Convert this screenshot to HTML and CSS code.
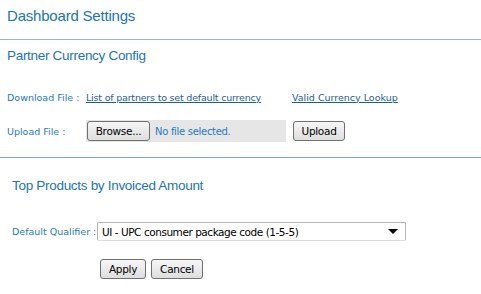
FILE: index.html
```html
<!DOCTYPE html>
<html lang="en">
<head>
    <meta charset="UTF-8">
    <meta name="viewport" content="width=device-width, initial-scale=1.0">
    <title>Dashboard Settings</title>
    <link rel="stylesheet" href="styles.css">
</head>
<body>

    <div class="page-title">Dashboard Settings</div>

    <div class="section currency">
        <h2>Partner Currency Config</h2>
        <div class="row download-row">
            <span class="label">Download File :</span>
            <a href="#" class="link partners-link">List of partners to set default currency</a>
            <a href="#" class="link">Valid Currency Lookup</a>
        </div>
        <div class="row upload-row">
            <span class="label">Upload File :</span>
            <div class="file-box">
                <button class="btn browse">Browse...</button>
                <span class="file-name">No file selected.</span>
            </div>
            <button class="btn upload">Upload</button>
        </div>
    </div>

    <div class="section products">
        <h2>Top Products by Invoiced Amount</h2>
        <div class="row qualifier-row">
            <span class="label">Default Qualifier :</span>
            <div class="select">
                <span>UI - UPC consumer package code (1-5-5)</span>
                <span class="arrow"></span>
            </div>
        </div>
        <div class="row actions">
            <button class="btn apply">Apply</button>
            <button class="btn cancel">Cancel</button>
        </div>
    </div>

</body>
</html>
```

FILE: styles.css
```css
body {
    margin: 0;
    background-color: #fff;
    font-family: "Liberation Sans", Arial, sans-serif;
    color: #1b76b9;
}
.page-title {
    padding: 7px 7px 0;
    height: 32px;
    font-size: 15px;
    line-height: 18px;
    letter-spacing: -0.2px;
    border-bottom: 1px solid #9fb5bf;
}
.section h2 {
    margin: 0;
    font-weight: normal;
    font-size: 13.5px;
    line-height: 18px;
    letter-spacing: -0.3px;
}
.currency {
    padding: 7px 0 15px 7px;
    border-bottom: 1px solid #7aaccb;
}
.products {
    padding: 19px 0 0 12px;
}
.row {
    display: flex;
    align-items: center;
}
.label {
    font-family: "DejaVu Sans", Verdana, sans-serif;
    font-size: 9.5px;
    color: #1f7bc0;
}
.currency .label {
    width: 79px;
}
.link {
    font-family: "DejaVu Sans", Verdana, sans-serif;
    font-size: 9.5px;
    color: #1a5fa0;
}
.download-row {
    margin-top: 22px;
    height: 20px;
}
.partners-link {
    width: 206px;
    letter-spacing: -0.2px;
}
.upload-row {
    margin-top: 13px;
    height: 22px;
}
.file-box {
    width: 199px;
    height: 22px;
    background-color: #e6e6e6;
    display: flex;
    align-items: center;
    padding-left: 1px;
    margin-right: 7px;
}
.file-name {
    font-family: "DejaVu Sans", Verdana, sans-serif;
    font-size: 10px;
    letter-spacing: -0.3px;
    color: #1f7bc0;
    margin-left: 5px;
}
.btn {
    font-family: "DejaVu Sans", Verdana, sans-serif;
    font-size: 10.5px;
    letter-spacing: -0.3px;
    color: #000;
    height: 20px;
    padding: 0;
    border: 1px solid #707070;
    border-radius: 3px;
    background: linear-gradient(#f6f6f6, #dedede);
}
.browse { width: 63px; }
.upload { width: 52px; }
.qualifier-row {
    margin-top: 27px;
    height: 19px;
}
.products .label {
    width: 85px;
}
.select {
    width: 296px;
    height: 17px;
    border: 1px solid #b5b5b5;
    border-bottom-color: #dcdcdc;
    border-radius: 2px;
    display: flex;
    align-items: center;
    justify-content: space-between;
    padding: 0 7px 0 4px;
    font-family: "DejaVu Sans", Verdana, sans-serif;
    font-size: 10.5px;
    letter-spacing: -0.45px;
    color: #000;
}
.arrow {
    width: 0;
    height: 0;
    border-left: 5px solid transparent;
    border-right: 5px solid transparent;
    border-top: 5px solid #000;
}
.actions {
    margin-top: 18px;
    padding-left: 88px;
    gap: 5px;
}
.apply { width: 46px; }
.cancel { width: 52px; }
```
